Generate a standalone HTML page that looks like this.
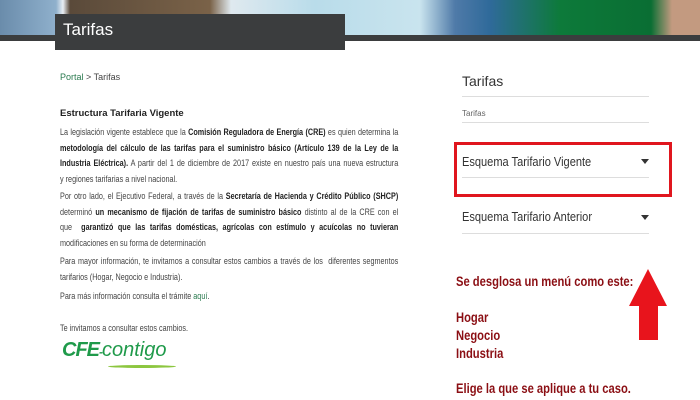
<!DOCTYPE html>
<html><head><meta charset="utf-8"><style>
body{margin:0;width:700px;height:400px;overflow:hidden;background:#fff;font-family:"Liberation Sans",sans-serif;position:relative}
.a{position:absolute}
.p{position:absolute;left:60px;width:448px;font-size:9.6px;color:#444;line-height:15.5px;margin:0;transform:scaleX(0.755);transform-origin:0 0}
.p div{white-space:nowrap;text-align:justify;text-align-last:justify}
.p div.l{text-align-last:left}
.p b{color:#222}
.h{border-bottom:1px solid #ddd;left:462px;width:187px}
.tri{position:absolute;width:0;height:0;border-left:4px solid transparent;border-right:4px solid transparent;border-top:5px solid #333}
.r{color:#8b0f14;font-weight:bold;font-size:14px;position:absolute;left:456px;transform:scaleX(0.8);transform-origin:0 0;white-space:nowrap}
.d{position:absolute;left:462px;font-size:13px;color:#333;transform:scaleX(0.85);transform-origin:0 0;white-space:nowrap}
</style></head><body>
<div class="a" style="left:0;top:0;width:700px;height:35px;background:linear-gradient(90deg,#6a8cab 0,#8fb0cc 8%,#e8eef3 9%,#5a4a3a 10%,#7a6248 30%,#dfe9ef 33%,#b9dcea 45%,#c9e4ee 60%,#4f7aa8 65%,#2f6a9a 70%,#0d7a3a 80%,#0a6e33 93%,#c39a80 96%)"></div>
<div class="a" style="left:0;top:35px;width:700px;height:6px;background:#3b3d3e"></div>
<div class="a" style="left:55px;top:14px;width:290px;height:36px;background:#3b3d3e"></div>
<div class="a" style="left:63px;top:20px;color:#fff;font-size:17px">Tarifas</div>
<div class="a" style="left:60px;top:72px;font-size:9px;color:#444"><span style="color:#2a7a4f">Portal</span> &gt; Tarifas</div>
<div class="a" style="left:60px;top:108px;font-size:9.5px;font-weight:bold;color:#222">Estructura Tarifaria Vigente</div>
<div class="p" style="top:125px">
<div>La legislación vigente establece que la <b>Comisión Reguladora de Energía (CRE)</b> es quien determina la</div>
<div><b>metodología del cálculo de las tarifas para el suministro básico (Artículo 139 de la Ley de la</b></div>
<div><b>Industria Eléctrica).</b> A partir del 1 de diciembre de 2017 existe en nuestro país una nueva estructura</div>
<div class="l">y regiones tarifarias a nivel nacional.</div>
</div>
<div class="p" style="top:189px">
<div>Por otro lado, el Ejecutivo Federal, a través de la <b>Secretaría de Hacienda y Crédito Público (SHCP)</b></div>
<div>determinó <b>un mecanismo de fijación de tarifas de suministro básico</b> distinto al de la CRE con el</div>
<div>que &nbsp;<b>garantizó que las tarifas domésticas, agrícolas con estímulo y acuícolas no tuvieran</b></div>
<div class="l">modificaciones en su forma de determinación</div>
</div>
<div class="p" style="top:254px">
<div>Para mayor información, te invitamos a consultar estos cambios a través de los &nbsp;diferentes segmentos</div>
<div class="l">tarifarios (Hogar, Negocio e Industria).</div>
</div>
<div class="p" style="top:289px"><div class="l">Para más información consulta el trámite <span style="color:#2a7a4f">aquí</span>.</div></div>
<div class="p" style="top:321px"><div class="l">Te invitamos a consultar estos cambios.</div></div>
<div class="a" style="left:62px;top:339px;font-size:20px;font-weight:bold;font-style:italic;color:#1f9a4a;letter-spacing:-1px">CFE<span style="font-size:12px">-</span><span style="font-weight:normal;letter-spacing:0">contigo</span></div>
<div class="a" style="left:108px;top:365px;width:68px;height:3px;border-radius:50%;background:#8cc63f"></div>
<div class="a" style="left:462px;top:73px;font-size:14px;color:#333">Tarifas</div>
<div class="a h" style="top:96px"></div>
<div class="a" style="left:462px;top:109px;font-size:8px;color:#666">Tarifas</div>
<div class="a h" style="top:122px"></div>
<div class="a" style="left:454px;top:142px;width:218px;height:55px;border:3px solid #e0161e;box-sizing:border-box"></div>
<div class="d" style="top:154px">Esquema Tarifario Vigente</div>
<div class="tri" style="left:641px;top:159px"></div>
<div class="a h" style="top:177px"></div>
<div class="d" style="top:209px">Esquema Tarifario Anterior</div>
<div class="tri" style="left:641px;top:215px"></div>
<div class="a h" style="top:233px"></div>
<div class="r" style="top:273px">Se desglosa un menú como este:</div>
<div class="r" style="top:308px;line-height:18px">Hogar<br>Negocio<br>Industria</div>
<div class="r" style="top:380px">Elige la que se aplique a tu caso.</div>
<svg class="a" style="left:627px;top:268px" width="45" height="75"><polygon points="21,1 40,38 31,38 31,72 12,72 12,38 2,38" fill="#e8141c"/></svg>
</body></html>
